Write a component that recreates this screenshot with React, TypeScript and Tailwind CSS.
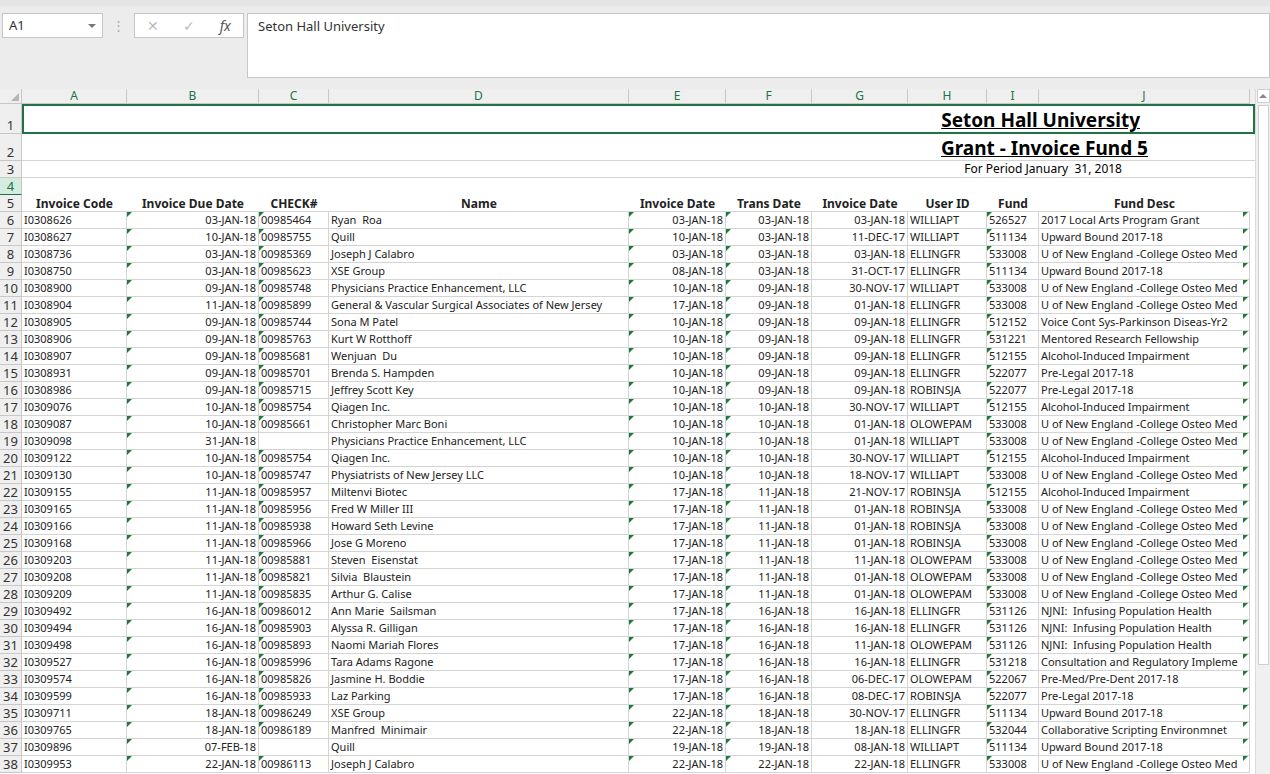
const COLS = "grid-cols-[22px_105px_132px_70px_300px_97px_86px_96px_79px_52px_211px]";

const data: string[][] = [
  ["I0308626","03-JAN-18","00985464","Ryan  Roa","03-JAN-18","03-JAN-18","03-JAN-18","WILLIAPT","526527","2017 Local Arts Program Grant"],
  ["I0308627","10-JAN-18","00985755","Quill","10-JAN-18","03-JAN-18","11-DEC-17","WILLIAPT","511134","Upward Bound 2017-18"],
  ["I0308736","03-JAN-18","00985369","Joseph J Calabro","03-JAN-18","03-JAN-18","03-JAN-18","ELLINGFR","533008","U of New England -College Osteo Med"],
  ["I0308750","03-JAN-18","00985623","XSE Group","08-JAN-18","03-JAN-18","31-OCT-17","ELLINGFR","511134","Upward Bound 2017-18"],
  ["I0308900","09-JAN-18","00985748","Physicians Practice Enhancement, LLC","10-JAN-18","09-JAN-18","30-NOV-17","WILLIAPT","533008","U of New England -College Osteo Med"],
  ["I0308904","11-JAN-18","00985899","General & Vascular Surgical Associates of New Jersey","17-JAN-18","09-JAN-18","01-JAN-18","ELLINGFR","533008","U of New England -College Osteo Med"],
  ["I0308905","09-JAN-18","00985744","Sona M Patel","10-JAN-18","09-JAN-18","09-JAN-18","ELLINGFR","512152","Voice Cont Sys-Parkinson Diseas-Yr2"],
  ["I0308906","09-JAN-18","00985763","Kurt W Rotthoff","10-JAN-18","09-JAN-18","09-JAN-18","ELLINGFR","531221","Mentored Research Fellowship"],
  ["I0308907","09-JAN-18","00985681","Wenjuan  Du","10-JAN-18","09-JAN-18","09-JAN-18","ELLINGFR","512155","Alcohol-Induced Impairment"],
  ["I0308931","09-JAN-18","00985701","Brenda S. Hampden","10-JAN-18","09-JAN-18","09-JAN-18","ELLINGFR","522077","Pre-Legal 2017-18"],
  ["I0308986","09-JAN-18","00985715","Jeffrey Scott Key","10-JAN-18","09-JAN-18","09-JAN-18","ROBINSJA","522077","Pre-Legal 2017-18"],
  ["I0309076","10-JAN-18","00985754","Qiagen Inc.","10-JAN-18","10-JAN-18","30-NOV-17","WILLIAPT","512155","Alcohol-Induced Impairment"],
  ["I0309087","10-JAN-18","00985661","Christopher Marc Boni","10-JAN-18","10-JAN-18","01-JAN-18","OLOWEPAM","533008","U of New England -College Osteo Med"],
  ["I0309098","31-JAN-18","","Physicians Practice Enhancement, LLC","10-JAN-18","10-JAN-18","01-JAN-18","WILLIAPT","533008","U of New England -College Osteo Med"],
  ["I0309122","10-JAN-18","00985754","Qiagen Inc.","10-JAN-18","10-JAN-18","30-NOV-17","WILLIAPT","512155","Alcohol-Induced Impairment"],
  ["I0309130","10-JAN-18","00985747","Physiatrists of New Jersey LLC","10-JAN-18","10-JAN-18","18-NOV-17","WILLIAPT","533008","U of New England -College Osteo Med"],
  ["I0309155","11-JAN-18","00985957","Miltenvi Biotec","17-JAN-18","11-JAN-18","21-NOV-17","ROBINSJA","512155","Alcohol-Induced Impairment"],
  ["I0309165","11-JAN-18","00985956","Fred W Miller III","17-JAN-18","11-JAN-18","01-JAN-18","ROBINSJA","533008","U of New England -College Osteo Med"],
  ["I0309166","11-JAN-18","00985938","Howard Seth Levine","17-JAN-18","11-JAN-18","01-JAN-18","ROBINSJA","533008","U of New England -College Osteo Med"],
  ["I0309168","11-JAN-18","00985966","Jose G Moreno","17-JAN-18","11-JAN-18","01-JAN-18","ROBINSJA","533008","U of New England -College Osteo Med"],
  ["I0309203","11-JAN-18","00985881","Steven  Eisenstat","17-JAN-18","11-JAN-18","11-JAN-18","OLOWEPAM","533008","U of New England -College Osteo Med"],
  ["I0309208","11-JAN-18","00985821","Silvia  Blaustein","17-JAN-18","11-JAN-18","01-JAN-18","OLOWEPAM","533008","U of New England -College Osteo Med"],
  ["I0309209","11-JAN-18","00985835","Arthur G. Calise","17-JAN-18","11-JAN-18","01-JAN-18","OLOWEPAM","533008","U of New England -College Osteo Med"],
  ["I0309492","16-JAN-18","00986012","Ann Marie  Sailsman","17-JAN-18","16-JAN-18","16-JAN-18","ELLINGFR","531126","NJNI:  Infusing Population Health"],
  ["I0309494","16-JAN-18","00985903","Alyssa R. Gilligan","17-JAN-18","16-JAN-18","16-JAN-18","ELLINGFR","531126","NJNI:  Infusing Population Health"],
  ["I0309498","16-JAN-18","00985893","Naomi Mariah Flores","17-JAN-18","16-JAN-18","11-JAN-18","OLOWEPAM","531126","NJNI:  Infusing Population Health"],
  ["I0309527","16-JAN-18","00985996","Tara Adams Ragone","17-JAN-18","16-JAN-18","16-JAN-18","ELLINGFR","531218","Consultation and Regulatory Impleme"],
  ["I0309574","16-JAN-18","00985826","Jasmine H. Boddie","17-JAN-18","16-JAN-18","06-DEC-17","OLOWEPAM","522067","Pre-Med/Pre-Dent 2017-18"],
  ["I0309599","16-JAN-18","00985933","Laz Parking","17-JAN-18","16-JAN-18","08-DEC-17","ROBINSJA","522077","Pre-Legal 2017-18"],
  ["I0309711","18-JAN-18","00986249","XSE Group","22-JAN-18","18-JAN-18","30-NOV-17","ELLINGFR","511134","Upward Bound 2017-18"],
  ["I0309765","18-JAN-18","00986189","Manfred  Minimair","22-JAN-18","18-JAN-18","18-JAN-18","ELLINGFR","532044","Collaborative Scripting Environmnet"],
  ["I0309896","07-FEB-18","","Quill","19-JAN-18","19-JAN-18","08-JAN-18","WILLIAPT","511134","Upward Bound 2017-18"],
  ["I0309953","22-JAN-18","00986113","Joseph J Calabro","22-JAN-18","22-JAN-18","22-JAN-18","ELLINGFR","533008","U of New England -College Osteo Med"],
];

const Tri = () => (
  <span className="absolute left-0 top-0 w-0 h-0 border-t-[5px] border-r-[5px] border-t-[#1f7a3a] border-r-transparent" />
);

const RowHead = ({ n, h, active }: { n: number; h: string; active?: boolean }) => (
  <div
    className={`${h} flex items-end justify-center pb-[1px] border-r border-b border-[#c8c8c8] text-[13px] leading-none [font-family:'Open_Sans',sans-serif] ${
      active ? "bg-[#d3ece0] text-[#217346] border-b-[#217346]" : "bg-[#efefef] text-[#333]"
    }`}
  >
    {n}
  </div>
);

export default function App() {
  const cell = "relative h-[17px] border-b border-r border-[#d4d4d4] text-[11px] leading-[16px] text-[#222] whitespace-pre overflow-hidden px-[2px]";
  return (
    <div className="w-[1270px] h-[774px] overflow-hidden bg-white [font-family:'Liberation_Sans',Arial,sans-serif]">
      {/* formula bar */}
      <div className="h-[89px] bg-[#ececec] border-t-[6px] border-[#e4e4e4] pt-[7px] flex items-start [font-family:'Open_Sans',sans-serif]">
        <div className="ml-[2px] w-[101px] h-[25px] bg-white border border-[#c6c6c6] flex items-center justify-between px-[6px] text-[13px] text-[#333]">
          A1
          <span className="w-0 h-0 border-l-[4px] border-r-[4px] border-t-[4px] border-l-transparent border-r-transparent border-t-[#777]" />
        </div>
        <div className="w-[31px] h-[25px] flex items-center justify-center text-[#aaa] text-[13px]">⋮</div>
        <div className="w-[110px] h-[25px] bg-white border border-[#c6c6c6] flex items-center justify-around text-[#bbb] text-[14px]">
          <span>✕</span><span>✓</span><span className="[font-family:'Liberation_Serif',serif] italic text-[#555]">fx</span>
        </div>
        <div className="ml-[3px] flex-1 h-[65px] bg-white border border-[#c6c6c6] px-[10px] pt-[3px] text-[13px] text-[#333]">
          Seton Hall University
        </div>
      </div>
      <div className="flex">
        <div className="w-[1255px]">
          {/* column header */}
          <div className={`grid ${COLS} h-[15px] bg-[#efefef] text-[12px] text-[#217346] [font-family:'Open_Sans',sans-serif]`}>
            <div className="border-r border-b border-[#c8c8c8] flex items-end justify-end pr-[2px] pb-[2px]">
              <span className="w-0 h-0 [border-bottom:8px_solid_#b5b5b5] [border-left:8px_solid_transparent]" />
            </div>
            {"ABCDEFGHIJ".split("").map((c) => (
              <div key={c} className="border-r border-b border-[#c8c8c8] flex items-center justify-center leading-none">
                {c}
              </div>
            ))}
          </div>
          {/* title rows */}
          <div className="grid grid-cols-[22px_1233px]">
            <RowHead n={1} h="h-[30px]" />
            <div className="h-[30px] border-2 border-[#217346] flex items-end justify-end pr-[113px]">
              <span className="text-[19px] font-bold underline leading-[24px] text-black">Seton Hall University</span>
            </div>
            <RowHead n={2} h="h-[27px]" />
            <div className="h-[27px] border-b border-[#d4d4d4] flex items-end justify-end pr-[107px]">
              <span className="text-[19px] font-bold underline leading-[24px] text-black">Grant - Invoice Fund 5</span>
            </div>
            <RowHead n={3} h="h-[17px]" />
            <div className="h-[17px] border-b border-[#d4d4d4] flex items-center justify-end pr-[133px] text-[12px] text-black whitespace-pre">
              For Period January  31, 2018
            </div>
            <RowHead n={4} h="h-[17px]" active />
            <div className="h-[17px]" />
          </div>
          {/* header row */}
          <div className={`grid ${COLS}`}>
            <RowHead n={5} h="h-[17px]" />
            {["Invoice Code","Invoice Due Date","CHECK#","Name","Invoice Date","Trans Date","Invoice Date","User ID","Fund","Fund Desc"].map((t, i) => (
              <div key={i} className="h-[17px] border-b border-[#d4d4d4] flex items-center justify-center text-[12px] font-bold text-[#222] leading-[15px] whitespace-nowrap">
                {t}
              </div>
            ))}
          </div>
          {data.map((r, i) => (
            <div key={i} className={`grid ${COLS}`}>
              <RowHead n={i + 6} h="h-[17px]" />
              <div className={cell}>{r[0]}</div>
              <div className={`${cell} text-right`}><Tri />{r[1]}</div>
              <div className={cell}>{r[2] && <Tri />}{r[2]}</div>
              <div className={cell}>{r[3]}</div>
              <div className={`${cell} text-right`}><Tri />{r[4]}</div>
              <div className={`${cell} text-right`}><Tri />{r[5]}</div>
              <div className={`${cell} text-right`}>{r[6]}</div>
              <div className={cell}>{r[7]}</div>
              <div className={cell}><Tri />{r[8]}</div>
              <div className={`${cell} pr-[6px]`}>
                {r[9]}
                <span className="absolute right-[1px] top-0 w-0 h-0 border-t-[5px] border-r-[5px] border-t-[#1f7a3a] border-r-transparent" />
              </div>
            </div>
          ))}
        </div>
        {/* vertical scrollbar */}
        <div className="w-[15px] h-[685px] bg-[#f0f0f0] border-l border-[#dadada] flex flex-col items-center">
          <div className="w-[13px] h-[14px] border border-[#cfcfcf] bg-white flex items-center justify-center">
            <span className="w-0 h-0 border-l-[4px] border-r-[4px] border-b-[4px] border-l-transparent border-r-transparent border-b-[#888]" />
          </div>
          <div className="w-[11px] h-[560px] mt-[2px] bg-white border border-[#cfcfcf]" />
        </div>
      </div>
    </div>
  );
}
